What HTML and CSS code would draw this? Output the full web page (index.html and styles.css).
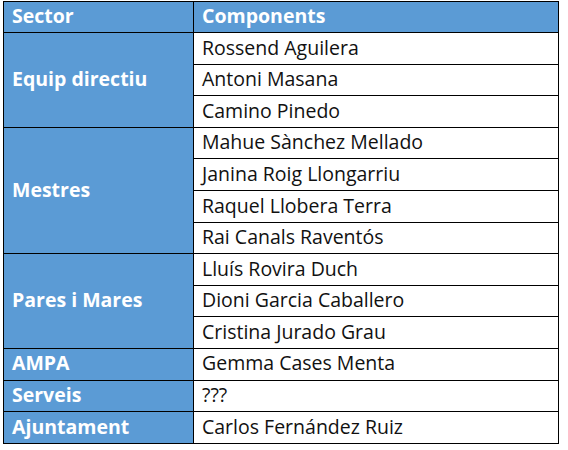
FILE: index.html
```html
<!DOCTYPE html>
<html lang="ca">
<head>
<meta charset="utf-8">
<title>Sectors</title>
<link rel="stylesheet" href="styles.css">
</head>
<body>
<table class="sectors">
  <colgroup><col class="c-sector"><col class="c-comp"></colgroup>
  <thead>
    <tr class="head"><th>Sector</th><th>Components</th></tr>
  </thead>
  <tbody>
    <tr><th rowspan="3">Equip directiu</th><td>Rossend Aguilera</td></tr>
    <tr><td>Antoni Masana</td></tr>
    <tr><td>Camino Pinedo</td></tr>
    <tr><th rowspan="4">Mestres</th><td>Mahue Sànchez Mellado</td></tr>
    <tr><td>Janina Roig Llongarriu</td></tr>
    <tr><td>Raquel Llobera Terra</td></tr>
    <tr><td>Rai Canals Raventós</td></tr>
    <tr><th rowspan="3">Pares i Mares</th><td>Lluís Rovira Duch</td></tr>
    <tr><td>Dioni Garcia Caballero</td></tr>
    <tr><td>Cristina Jurado Grau</td></tr>
    <tr><th>AMPA</th><td>Gemma Cases Menta</td></tr>
    <tr><th>Serveis</th><td>???</td></tr>
    <tr><th>Ajuntament</th><td>Carlos Fernández Ruiz</td></tr>
  </tbody>
</table>
</body>
</html>
```

FILE: styles.css
```css
html, body {
  margin: 0;
  padding: 0;
  background: #ffffff;
}
body {
  padding: 1px 0 0 3px;
  font-family: "Open Sans", "Noto Sans", sans-serif;
  font-size: 19.5px;
  color: #111111;
}
.sectors {
  border-collapse: collapse;
  table-layout: fixed;
  width: 555px;
}
.c-sector { width: 190px; }
.c-comp { width: 365px; }
.sectors th,
.sectors td {
  border: 1px solid #000000;
  padding: 0 0 2px 8px;
  height: 31.6px;
  text-align: left;
  vertical-align: middle;
  line-height: 1;
  box-sizing: border-box;
}
.sectors th {
  background: #5b9bd5;
  color: #ffffff;
  font-weight: 700;
}
.sectors td {
  font-weight: 400;
}
.sectors .head th {
  height: 31px;
}
```
